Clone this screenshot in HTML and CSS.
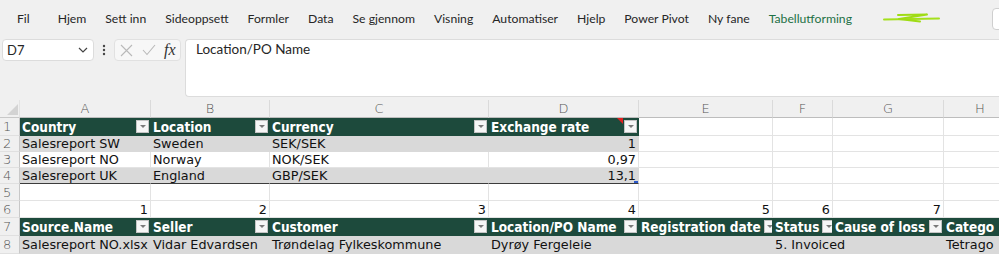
FILE: index.html
```html
<!DOCTYPE html>
<html lang="no">
<head>
    <meta charset="UTF-8">
    <meta name="viewport" content="width=device-width, initial-scale=1.0">
    <title>Salesreport - Excel</title>
    <link rel="stylesheet" href="styles.css">
</head>
<body>
    <div class="ribbon">
        <nav class="tabs">
            <span class="tab tab-first">Fil</span>
            <span class="tab">Hjem</span>
            <span class="tab">Sett inn</span>
            <span class="tab">Sideoppsett</span>
            <span class="tab">Formler</span>
            <span class="tab">Data</span>
            <span class="tab">Se gjennom</span>
            <span class="tab">Visning</span>
            <span class="tab">Automatiser</span>
            <span class="tab">Hjelp</span>
            <span class="tab">Power Pivot</span>
            <span class="tab">Ny fane</span>
            <span class="tab tab-context">Tabellutforming</span>
        </nav>
        <svg class="scribble" width="58" height="12" viewBox="0 0 58 12">
            <path d="M1 6.5 L56 5.5" stroke="#a4e01c" stroke-width="2" stroke-linecap="round" fill="none"/>
            <path d="M15 2 L44 1.5 L16 6 L37 8.5" stroke="#9fdc14" stroke-width="2" stroke-linecap="round" stroke-linejoin="round" fill="none"/>
        </svg>
        <div class="search-edge"></div>
    </div>

    <div class="formula-row">
        <div class="name-box">
            <span>D7</span>
            <svg width="10" height="6" viewBox="0 0 10 6"><polyline points="1,1 5,5 9,1" fill="none" stroke="#444" stroke-width="1.2"/></svg>
        </div>
        <div class="grip">
            <svg width="4" height="12" viewBox="0 0 4 12"><circle cx="2" cy="2" r="1.2" fill="#444"/><circle cx="2" cy="6" r="1.2" fill="#444"/><circle cx="2" cy="10" r="1.2" fill="#444"/></svg>
        </div>
        <div class="fx-box">
            <svg width="13" height="13" viewBox="0 0 13 13"><path d="M1 1 L12 12 M12 1 L1 12" stroke="#b9b9b9" stroke-width="1.1" fill="none"/></svg>
            <svg width="14" height="12" viewBox="0 0 14 12"><polyline points="1,6 5,10.5 13,1" stroke="#b9b9b9" stroke-width="1.1" fill="none"/></svg>
            <span class="fx">fx</span>
        </div>
        <div class="formula-input">Location/PO Name</div>
    </div>

    <div class="sheet">
        <!-- column letters -->
        <div class="c corner"><span class="select-all"></span></div>
        <div class="c ch">A</div>
        <div class="c ch">B</div>
        <div class="c ch">C</div>
        <div class="c ch">D</div>
        <div class="c ch">E</div>
        <div class="c ch">F</div>
        <div class="c ch">G</div>
        <div class="c ch edge col-h">H</div>

        <!-- row 1 -->
        <div class="c rn">1</div>
        <div class="c th">Country<span class="drop"></span></div>
        <div class="c th">Location<span class="drop"></span></div>
        <div class="c th">Currency<span class="drop"></span></div>
        <div class="c th note-cell">Exchange rate<span class="note"></span><span class="drop"></span></div>
        <div class="c"></div>
        <div class="c"></div>
        <div class="c"></div>
        <div class="c edge"></div>

        <!-- row 2 -->
        <div class="c rn">2</div>
        <div class="c band">Salesreport SW</div>
        <div class="c band">Sweden</div>
        <div class="c band">SEK/SEK</div>
        <div class="c band num">1</div>
        <div class="c"></div>
        <div class="c"></div>
        <div class="c"></div>
        <div class="c edge"></div>

        <!-- row 3 -->
        <div class="c rn">3</div>
        <div class="c">Salesreport NO</div>
        <div class="c">Norway</div>
        <div class="c">NOK/SEK</div>
        <div class="c num">0,97</div>
        <div class="c"></div>
        <div class="c"></div>
        <div class="c"></div>
        <div class="c edge"></div>

        <!-- row 4 -->
        <div class="c rn">4</div>
        <div class="c band last">Salesreport UK</div>
        <div class="c band last">England</div>
        <div class="c band last">GBP/SEK</div>
        <div class="c band last num note-cell">13,1<span class="resize"></span></div>
        <div class="c"></div>
        <div class="c"></div>
        <div class="c"></div>
        <div class="c edge"></div>

        <!-- row 5 -->
        <div class="c rn">5</div>
        <div class="c"></div>
        <div class="c"></div>
        <div class="c"></div>
        <div class="c"></div>
        <div class="c"></div>
        <div class="c"></div>
        <div class="c"></div>
        <div class="c edge"></div>

        <!-- row 6 -->
        <div class="c rn">6</div>
        <div class="c num">1</div>
        <div class="c num">2</div>
        <div class="c num">3</div>
        <div class="c num">4</div>
        <div class="c num">5</div>
        <div class="c num">6</div>
        <div class="c num">7</div>
        <div class="c edge"></div>

        <!-- row 7 -->
        <div class="c rn">7</div>
        <div class="c th">Source.Name<span class="drop"></span></div>
        <div class="c th">Seller<span class="drop"></span></div>
        <div class="c th">Customer<span class="drop"></span></div>
        <div class="c th">Location/PO Name<span class="drop"></span></div>
        <div class="c th">Registration date<span class="drop"></span></div>
        <div class="c th">Status<span class="drop"></span></div>
        <div class="c th">Cause of loss<span class="drop"></span></div>
        <div class="c th edge">Catego</div>

        <!-- row 8 -->
        <div class="c rn">8</div>
        <div class="c band">Salesreport NO.xlsx</div>
        <div class="c band">Vidar Edvardsen</div>
        <div class="c band">Trøndelag Fylkeskommune</div>
        <div class="c band">Dyrøy Fergeleie</div>
        <div class="c band"></div>
        <div class="c band wide">5. Invoiced</div>
        <div class="c band edge">Tetrago</div>
    </div>
</body>
</html>
```

FILE: styles.css
```css
body {
    margin: 0;
    width: 999px;
    height: 254px;
    overflow: hidden;
    background-color: #f0f0f0;
    font-family: 'Lato', 'Open Sans', sans-serif;
    color: #262626;
}

/* ribbon tabs */
.ribbon {
    display: flex;
    align-items: center;
    height: 37px;
}
.tabs {
    display: flex;
    align-items: center;
    padding-left: 17px;
    font-size: 12.2px;
}
.tab {
    margin-right: 19px;
    white-space: nowrap;
}
.tab-first {
    margin-right: 28px;
}
.tab-context {
    color: #1e7145;
    margin-right: 0;
}
.scribble {
    margin-left: 31px;
    flex-shrink: 0;
}
.search-edge {
    margin-left: 51px;
    width: 200px;
    height: 20px;
    flex-shrink: 0;
    background: #fff;
    border: 1px solid #cfcfcf;
    border-radius: 4px;
}

/* formula bar */
.formula-row {
    display: flex;
    align-items: flex-start;
    height: 61px;
    padding: 2px 0 0 2px;
}
.name-box {
    display: flex;
    align-items: center;
    justify-content: space-between;
    box-sizing: border-box;
    width: 92px;
    height: 22px;
    padding: 0 5px 0 4px;
    background: #fff;
    border: 1px solid #dcdcdc;
    border-radius: 4px;
    font-size: 13px;
}
.grip {
    display: flex;
    align-items: center;
    justify-content: center;
    width: 20px;
    height: 22px;
}
.fx-box {
    display: flex;
    align-items: center;
    gap: 9px;
    box-sizing: border-box;
    width: 67px;
    height: 22px;
    padding: 0 4px 0 5px;
    background: #f7f7f7;
    border: 1px solid #e1e1e1;
    border-radius: 4px;
}
.fx {
    font-family: 'Liberation Serif', serif;
    font-style: italic;
    font-size: 16px;
    color: #333;
    margin-left: -1px;
}
.formula-input {
    flex: 1;
    box-sizing: border-box;
    height: 58px;
    margin-left: 4px;
    padding: 1px 10px;
    background: #fff;
    border: 1px solid #dcdcdc;
    border-right: none;
    border-radius: 4px 0 0 4px;
    font-size: 13.5px;
}

/* sheet grid */
.sheet {
    display: grid;
    grid-template-columns: 20px 131px 119px 219px 150px 134px 60px 111px 55px;
    grid-template-rows: 18px 18px 16px 16px 16px 17px 17px 18px 18px;
    width: 999px;
    background: #fff;
    font-family: 'DejaVu Sans', sans-serif;
    font-size: 12.8px;
    color: #111;
}
.c {
    display: flex;
    align-items: center;
    box-sizing: border-box;
    padding: 0 2px;
    white-space: nowrap;
    border-right: 1px solid #e3e3e3;
    border-bottom: 1px solid #e3e3e3;
    min-width: 0;
}
.corner, .ch, .rn {
    background: #f0f0f0;
    color: #555;
    font-weight: 300;
    font-size: 13px;
}
.corner {
    justify-content: flex-end;
    align-items: flex-end;
    padding: 0 1px 2px 0;
    border-bottom-color: #c8c8c8;
}
.select-all {
    width: 0;
    height: 0;
    border-left: 11px solid transparent;
    border-bottom: 11px solid #d3d3d3;
}
.ch {
    justify-content: center;
    border-right-color: #dadada;
    border-bottom-color: #bdbdbd;
}
.col-h {
    justify-content: flex-start;
    padding-left: 31px;
}
.rn {
    padding-left: 3px;
    border-right-color: #c8c8c8;
    border-bottom-color: #e0e0e0;
}
.th {
    position: relative;
    justify-content: space-between;
    background: #1d4a3c;
    color: #fff;
    font-family: 'DejaVu Sans Condensed', 'DejaVu Sans', sans-serif;
    font-size: 13.5px;
    font-weight: bold;
    border-color: #1d4a3c;
    overflow: hidden;
    padding-right: 1px;
}
.edge {
    overflow: hidden;
    border-right: none;
}
.drop {
    display: flex;
    align-items: center;
    justify-content: center;
    flex-shrink: 0;
    box-sizing: border-box;
    width: 13px;
    height: 13px;
    margin-left: 3px;
    background: #f6f6f6;
    border: 1px solid #c4c4c4;
}
.drop::after {
    content: "";
    border-left: 3px solid transparent;
    border-right: 3px solid transparent;
    border-top: 3px solid #7a7a7a;
}
.band {
    background: #d9d9d9;
    border-right-color: #d9d9d9;
    border-bottom-color: #d9d9d9;
}
.last {
    border-bottom-color: #3c3c3c;
}
.num {
    justify-content: flex-end;
}
.wide {
    grid-column: span 2;
}
.note-cell {
    position: relative;
}
.note {
    position: absolute;
    top: 0;
    right: 15px;
    width: 0;
    height: 0;
    border-left: 6px solid transparent;
    border-top: 6px solid #e02020;
}
.resize {
    position: absolute;
    right: 0;
    bottom: 0;
    width: 4px;
    height: 2px;
    background: #2b57c8;
}
```
